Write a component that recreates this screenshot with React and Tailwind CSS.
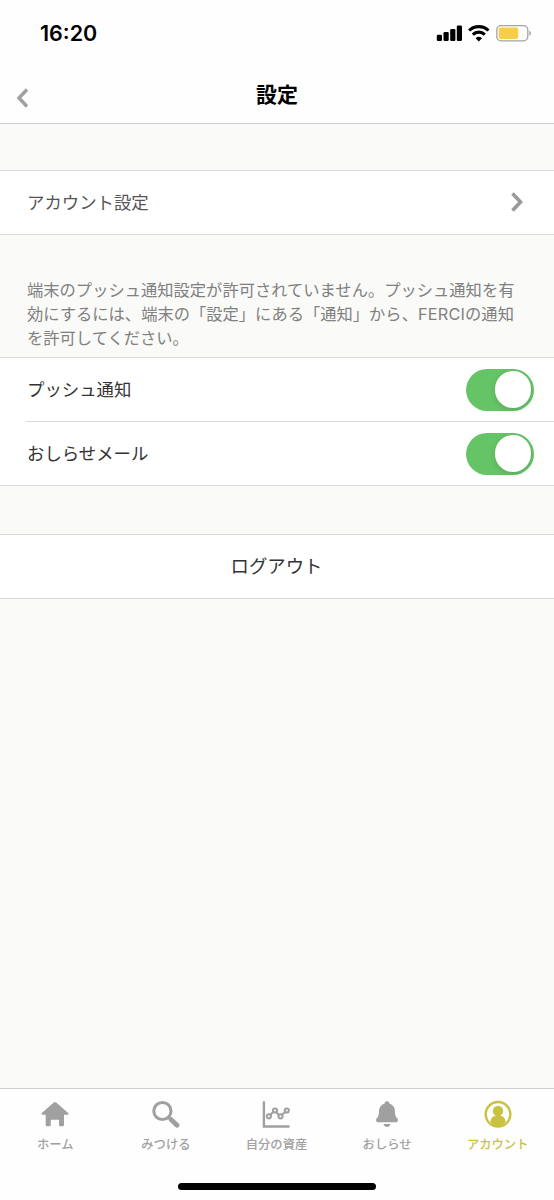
import React from 'react';

function StatusBar() {
  return (
    <div className="flex h-[66px] items-center justify-between pl-[40px] pr-[22px]">
      <span className="pt-[2px] font-['Inter'] text-[21.5px] font-semibold leading-none text-black">16:20</span>
      <svg className="h-[20px] w-[96px]" viewBox="0 0 96 20">
        <rect x="0.8" y="11.7" width="5.2" height="6.3" rx="1.2" />
        <rect x="7.5" y="9" width="5.2" height="9" rx="1.2" />
        <rect x="14.2" y="6" width="5.2" height="12" rx="1.2" />
        <rect x="20.8" y="2.5" width="5.2" height="15.5" rx="1.2" />
        <g fill="none" stroke="black" strokeWidth="3.1">
          <path d="M33.1 7.5a14 14 0 0 1 19.4 0" />
          <path d="M36.8 11.6a8.6 8.6 0 0 1 12 0" />
        </g>
        <path d="M39.6 15.2a4.8 4.8 0 0 1 6.4 0l-3.2 3.3z" />
        <rect x="60.8" y="2.7" width="31" height="15.2" rx="4.3" fill="none" stroke="#a3a3a3" strokeWidth="1.3" />
        <rect x="62.7" y="4.6" width="19.5" height="11.4" rx="2" fill="#f7ce46" />
        <path d="M93.3 7.8v5c2.2-.8 2.2-4.2 0-5z" fill="#a3a3a3" />
      </svg>
    </div>
  );
}

function Header() {
  return (
    <header className="h-[124px] shrink-0 border-b border-[#cdcdcd] bg-[#fefefe]">
      <StatusBar />
      <div className="grid h-[57px] grid-cols-3 items-center">
        <svg className="ml-[16px] mt-[7px] h-[20px] w-[13px]" viewBox="0 0 13 20" fill="none" stroke="#a0a0a0" strokeWidth="3.4">
          <path d="M11 1.5 3 10l8 8.5" />
        </svg>
        <h1 className="text-center text-[21px] font-bold leading-none text-black">設定</h1>
      </div>
    </header>
  );
}

function Toggle() {
  return (
    <div className="flex h-[42px] w-[68.5px] items-center justify-end rounded-full bg-[#65c466] pr-[3px]">
      <div className="size-[36.5px] rounded-full bg-white shadow-[0_2px_6px_rgba(0,0,0,0.12)]" />
    </div>
  );
}

const tabs = [
  {
    label: 'ホーム',
    icon: (
      <path
        fill="currentColor"
        d="M12.8 2.5q1.2-1 2.4 0L27.2 13q1 1.5-.7 1.7H23V25q0 1.3-1.3 1.3h-2.5q-1.2 0-1.2-1.3v-5.3H9.8V25q0 1.3-1.2 1.3H6Q4.7 26.3 4.7 25V14.7H1.5Q-.2 14.5.8 13z"
      />
    ),
  },
  {
    label: 'みつける',
    icon: (
      <g fill="none" stroke="currentColor">
        <circle cx="10.4" cy="11" r="8.6" strokeWidth="3" />
        <path d="m16.5 17.3 2.5 2.5" strokeWidth="3" />
        <path d="m19 19.5 6 5.8" strokeWidth="4.8" strokeLinecap="round" />
      </g>
    ),
  },
  {
    label: '自分の資産',
    icon: (
      <g fill="none" stroke="currentColor" strokeLinecap="round">
        <path d="M1.9 2.2v24.3h24.7" strokeWidth="2.4" />
        <path d="m8.3 14.7 3.2-2.9M14.3 12.2l2.7 2.7M20 14.7l3.4-2.9" strokeWidth="2.1" />
        <circle cx="6.9" cy="16.3" r="2.1" strokeWidth="2" />
        <circle cx="13" cy="10.5" r="2.1" strokeWidth="2" />
        <circle cx="18.5" cy="16.3" r="2.1" strokeWidth="2" />
        <circle cx="24.8" cy="10.5" r="2.1" strokeWidth="2" />
      </g>
    ),
  },
  {
    label: 'おしらせ',
    icon: (
      <g fill="currentColor">
        <path d="M14 1.3c-1.6 0-2.5 1-2.5 2.4-4.2 1.2-5.5 4.6-5.5 8.3 0 3.2-.7 4.6-2 6-.7.8-1.1 1.4-.9 2.5.2 1.1.9 1.8 2 1.8h17.8c1.1 0 1.8-.7 2-1.8.2-1.1-.2-1.7-.9-2.5-1.3-1.4-2-2.8-2-6 0-3.7-1.3-7.1-5.5-8.3 0-1.4-.9-2.4-2.5-2.4z" />
        <path d="M10.6 24h6.8c-.4 1.9-1.7 3-3.4 3s-3-1.1-3.4-3z" />
      </g>
    ),
  },
  {
    label: 'アカウント',
    active: true,
    icon: (
      <g fill="currentColor">
        <circle cx="14" cy="14.3" r="12.3" fill="none" stroke="currentColor" strokeWidth="2.4" />
        <circle cx="14" cy="11" r="5.2" />
        <path d="M6.3 22c.4-3.8 2.5-5.9 5.6-6.2h4.2c3.1.3 5.2 2.4 5.6 6.2-2 2.7-4.7 4.2-7.7 4.2S8.3 24.7 6.3 22z" />
      </g>
    ),
  },
];

export default function App() {
  return (
    <div className="flex h-[1200px] w-[554px] flex-col bg-[#fafaf8] font-['Inter','Noto_Sans_CJK_JP',sans-serif]">
      <Header />

      <main className="flex-1">
        <div className="mt-[46px] flex h-[64.5px] items-center justify-between border-y border-[#dadada] bg-white pl-[27px] pr-[30px]">
          <span className="pt-[2px] text-[17.4px] text-[#555]">アカウント設定</span>
          <svg className="h-[20px] w-[14px]" viewBox="0 0 14 20" fill="none" stroke="#999" strokeWidth="3.6">
            <path d="m2.5 1.5 8 8.5-8 8.5" />
          </svg>
        </div>

        <p className="mt-[43.5px] h-[79px] whitespace-nowrap pl-[27px] text-[16.3px] leading-[24px] text-[#808080]">
          端末のプッシュ通知設定が許可されていません。プッシュ通知を有
          <br />
          効にするには、端末の「設定」にある「通知」から、<span className="tracking-[0.2px]">FERCI</span>の通知
          <br />
          を許可してください。
        </p>

        {/* Notification switches */}
        <div className="border-y border-[#dadada] bg-white text-[17.4px] text-[#333]">
          <div className="flex h-[63px] items-center justify-between pl-[27px] pr-[20px]">
            <span className="pt-[2px]">プッシュ通知</span>
            <Toggle />
          </div>
          <div className="ml-[26px] flex h-[64px] items-center justify-between border-t border-[#dadada] pl-px pr-[20px]">
            <span className="pt-[2px]">おしらせメール</span>
            <Toggle />
          </div>
        </div>

        <div className="mt-[48px] flex h-[65px] items-center justify-center border-y border-[#dadada] bg-white pr-px text-[18.4px] text-[#333]">
          <span className="pt-px">ログアウト</span>
        </div>
      </main>

      <nav className="flex h-[112px] shrink-0 flex-col border-t border-[#cdcdcd] bg-[#fefefe]">
        <div className="grid h-[93.5px] grid-cols-5 pr-px pt-[11px]">
          {tabs.map((tab) => (
            <div
              key={tab.label}
              className={`flex flex-col items-center ${tab.active ? 'text-[#c9c23e]' : 'text-[#a0a0a0]'}`}
            >
              <svg className="size-[28px]" viewBox="0 0 28 28">
                {tab.icon}
              </svg>
              <span className="mt-[8px] text-[12.3px] font-medium leading-[18px]">{tab.label}</span>
            </div>
          ))}
        </div>
        <div className="mx-auto h-[7px] w-[198px] rounded-full bg-black" />
      </nav>
    </div>
  );
}
